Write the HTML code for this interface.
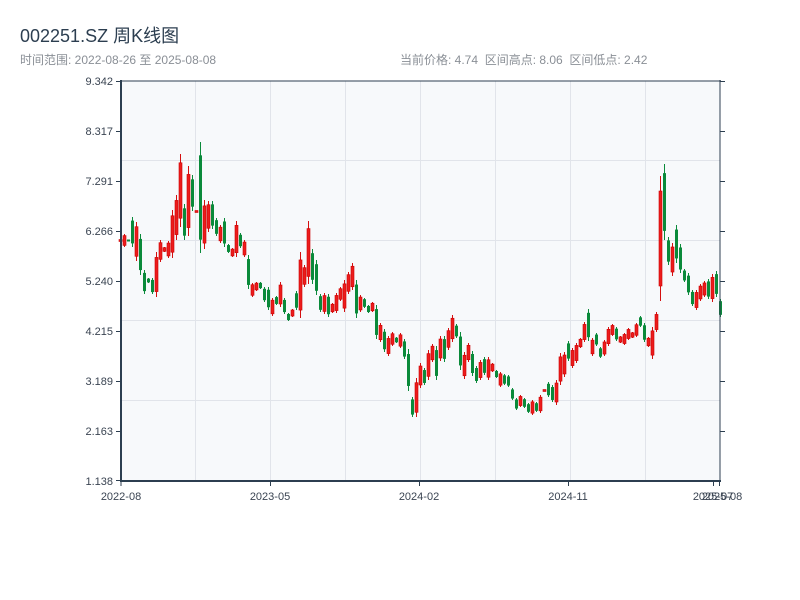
<!DOCTYPE html>
<html><head><meta charset="utf-8"><style>
html,body{margin:0;padding:0;background:#fff;width:800px;height:600px;overflow:hidden}
body{font-family:"Liberation Sans","Noto Sans CJK SC",sans-serif;position:relative}
.t{position:absolute;left:20px;top:22px;font-size:18px;color:#2c3e50}
.s{position:absolute;top:51px;font-size:12px;color:#8a8f96}
svg{position:absolute;left:0;top:0}
</style></head><body>
<div class="t">002251.SZ 周K线图</div>
<div class="s" style="left:20px">时间范围: 2022-08-26 至 2025-08-08</div>
<div class="s" style="left:400px">当前价格: 4.74&nbsp;&nbsp;区间高点: 8.06&nbsp;&nbsp;区间低点: 2.42</div>
<svg id="c" width="800" height="600" xmlns="http://www.w3.org/2000/svg" font-family="Liberation Sans, sans-serif" font-size="11">
<rect x="121" y="81" width="599" height="400" fill="#f7f9fb"/>
<g stroke="#e1e4ea" stroke-width="1">
<line x1="121" x2="720" y1="160.5" y2="160.5"/><line x1="121" x2="720" y1="240.5" y2="240.5"/>
<line x1="121" x2="720" y1="320.5" y2="320.5"/><line x1="121" x2="720" y1="400.5" y2="400.5"/>
<line y1="81" y2="481" x1="195.5" x2="195.5"/><line y1="81" y2="481" x1="270.5" x2="270.5"/>
<line y1="81" y2="481" x1="345.5" x2="345.5"/><line y1="81" y2="481" x1="420.5" x2="420.5"/>
<line y1="81" y2="481" x1="495.5" x2="495.5"/><line y1="81" y2="481" x1="570.5" x2="570.5"/>
<line y1="81" y2="481" x1="645.5" x2="645.5"/>
</g>
<g id="k"></g>
<g stroke="#2c3e50" fill="none">
<line x1="121" x2="121" y1="80" y2="482" stroke-width="2"/>
<line x1="720" x2="720" y1="80" y2="482" stroke-width="1"/>
<line x1="120" x2="721" y1="481" y2="481" stroke-width="2"/>
<line x1="120" x2="721" y1="81" y2="81" stroke-width="1"/>
<g stroke-width="1">
<line x1="116" x2="121" y1="81.5" y2="81.5"/><line x1="116" x2="121" y1="131.5" y2="131.5"/>
<line x1="116" x2="121" y1="181.5" y2="181.5"/><line x1="116" x2="121" y1="231.5" y2="231.5"/>
<line x1="116" x2="121" y1="281.5" y2="281.5"/><line x1="116" x2="121" y1="331.5" y2="331.5"/>
<line x1="116" x2="121" y1="381.5" y2="381.5"/><line x1="116" x2="121" y1="431.5" y2="431.5"/>
<line x1="116" x2="121" y1="480.5" y2="480.5"/>
<line x1="720" x2="725" y1="81.5" y2="81.5"/><line x1="720" x2="725" y1="131.5" y2="131.5"/>
<line x1="720" x2="725" y1="181.5" y2="181.5"/><line x1="720" x2="725" y1="231.5" y2="231.5"/>
<line x1="720" x2="725" y1="281.5" y2="281.5"/><line x1="720" x2="725" y1="331.5" y2="331.5"/>
<line x1="720" x2="725" y1="381.5" y2="381.5"/><line x1="720" x2="725" y1="431.5" y2="431.5"/>
<line y1="481" y2="486" x1="121" x2="121"/><line y1="481" y2="486" x1="270.5" x2="270.5"/>
<line y1="481" y2="486" x1="419.5" x2="419.5"/><line y1="481" y2="486" x1="568.5" x2="568.5"/>
<line y1="481" y2="486" x1="713.5" x2="713.5"/><line y1="481" y2="486" x1="719.5" x2="719.5"/>
</g></g>
<g fill="#3a4452" text-anchor="end">
<text x="113" y="85">9.342</text><text x="113" y="135">8.317</text><text x="113" y="185">7.291</text>
<text x="113" y="235">6.266</text><text x="113" y="285">5.240</text><text x="113" y="335">4.215</text>
<text x="113" y="385">3.189</text><text x="113" y="435">2.163</text><text x="113" y="485">1.138</text>
</g>
<g fill="#3a4452" text-anchor="middle">
<text x="121" y="500">2022-08</text><text x="270" y="500">2023-05</text><text x="419" y="500">2024-02</text>
<text x="568" y="500">2024-11</text><text x="713" y="500">2025-07</text><text x="722" y="500">2025-08</text>
</g>
</svg>
<script>
var d=[[240,241,'r'],[234,247,'r'],[240,241,'g'],[217,247,'g'],[222,261,'r'],[234,275,'g'],[270,294,'g'],[278,283,'g'],[278,294,'g'],[252,297,'r'],[240,262,'r'],[247,252,'r'],[241,258,'r'],[210,258,'r'],[195,240,'r'],[154,227,'r'],[204,240,'g'],[166,236,'r'],[175,211,'g'],[211,212,'r'],[142,253,'g'],[200,249,'r'],[201,232,'r'],[201,229,'g'],[218,236,'g'],[225,243,'r'],[218,247,'g'],[244,253,'g'],[248,257,'r'],[221,257,'r'],[233,248,'g'],[240,257,'r'],[255,289,'g'],[283,297,'r'],[282,291,'r'],[282,289,'g'],[287,302,'g'],[287,310,'g'],[298,316,'r'],[296,305,'g'],[282,307,'r'],[298,314,'g'],[313,321,'g'],[309,317,'r'],[291,310,'g'],[252,318,'r'],[265,287,'r'],[221,284,'r'],[249,284,'g'],[260,295,'g'],[294,312,'g'],[293,314,'r'],[294,317,'g'],[303,313,'r'],[293,313,'r'],[287,301,'r'],[280,312,'r'],[272,294,'r'],[263,290,'r'],[280,318,'g'],[295,312,'r'],[298,308,'g'],[305,313,'g'],[302,312,'r'],[305,339,'g'],[323,342,'r'],[329,352,'g'],[336,356,'r'],[332,346,'r'],[337,343,'g'],[333,348,'r'],[339,359,'g'],[349,391,'g'],[397,417,'g'],[378,417,'r'],
[363,388,'r'],[368,385,'g'],[350,380,'r'],[344,362,'r'],[346,380,'g'],[336,361,'r'],[336,362,'g'],[328,350,'r'],[315,342,'r'],[324,338,'g'],[332,370,'g'],[352,379,'r'],[343,362,'r'],[351,376,'g'],[366,383,'g'],[360,380,'r'],[357,375,'g'],[357,380,'r'],[363,372,'r'],[370,378,'g'],[372,387,'r'],[374,385,'g'],[375,387,'g'],[388,400,'g'],[398,410,'g'],[395,407,'r'],[398,408,'g'],[403,413,'g'],[400,415,'r'],[402,412,'g'],[395,413,'r'],[390,391,'r'],[382,397,'g'],[385,402,'g'],[380,405,'r'],[353,385,'r'],[352,377,'r'],[341,361,'g'],[348,368,'r'],[343,363,'r'],[338,348,'r'],[322,342,'r'],[309,341,'g'],[338,356,'r'],[333,346,'g'],[347,358,'g'],[340,356,'r'],[327,346,'r'],[324,336,'r'],[327,341,'g'],[336,343,'r'],[333,345,'r'],[328,340,'r'],[332,338,'r'],[323,337,'r'],[316,327,'g'],[323,342,'g'],[337,347,'r'],[327,359,'r'],[312,332,'r'],[176,301,'r'],[164,240,'g'],[237,265,'g'],[243,276,'r'],[225,263,'g'],[244,273,'g'],[269,282,'g'],[273,295,'g'],[290,306,'g'],[290,310,'r'],[284,301,'r'],[281,297,'r'],[279,299,'g'],[274,302,'r'],[271,297,'g'],[299,317,'g']];
var s='';for(var i=0;i<d.length;i++){var x=120+i*4,h=d[i][0],l=d[i][1],r=l-h,c=d[i][2]=='r';var col=c?'#d40f0f':'#0a8a3a';
var bt=h+r*0.12,bb=l-r*0.12;if(bb-bt<1.5){bt=(h+l)/2-1;bb=bt+2;}
s+='<line x1="'+(x+0.5)+'" x2="'+(x+0.5)+'" y1="'+h+'" y2="'+l+'" stroke="'+col+'" stroke-width="1"/>';
s+='<rect x="'+(x-1)+'" y="'+bt+'" width="3" height="'+(bb-bt)+'" fill="'+(c?'#ec1c1c':col)+'"'+(c?' stroke="#c00" stroke-width="0.6"':'')+'/>';}
document.getElementById('k').innerHTML=s;
</script>
</body></html>
